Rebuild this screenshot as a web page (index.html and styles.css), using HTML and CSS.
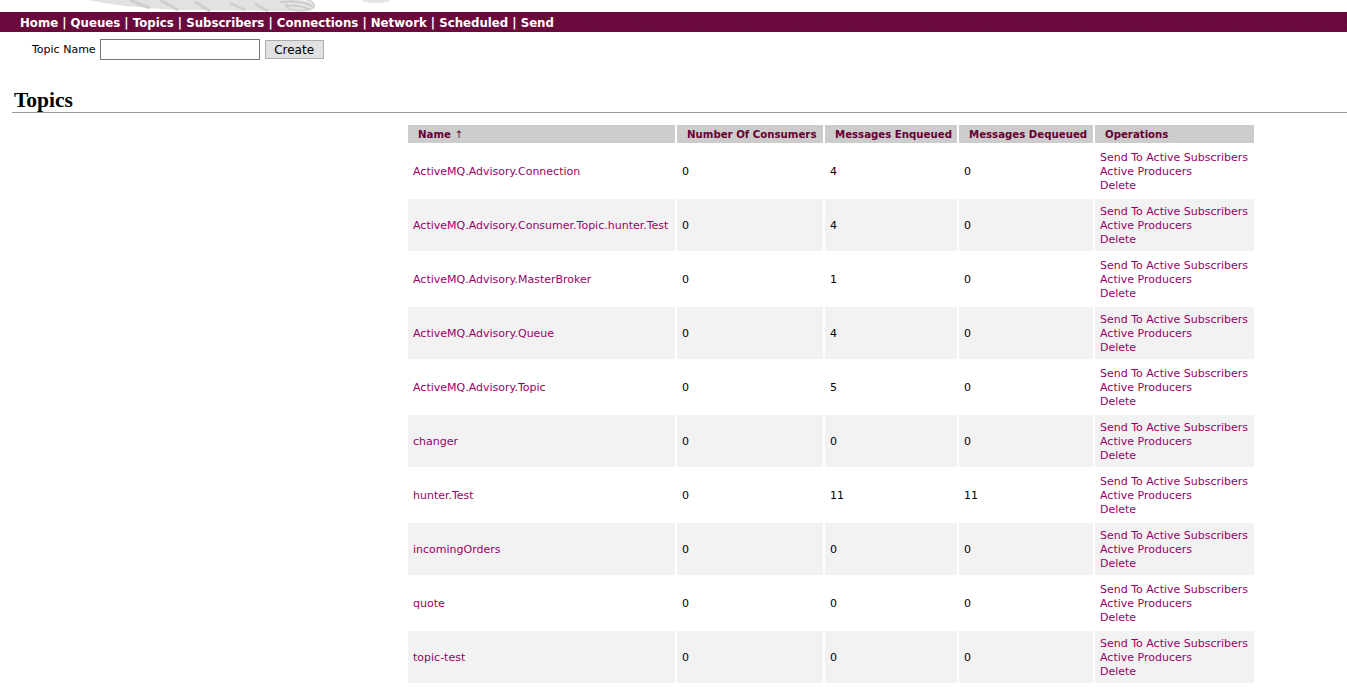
FILE: index.html
```html
<!DOCTYPE html>
<html>
<head>
<meta charset="utf-8">
<title>Topics</title>
<link rel="stylesheet" href="styles.css">
</head>
<body>
<div class="banner">
  <svg class="logo" width="420" height="12" viewBox="0 0 420 12">
    <path d="M88 0 L300 0 Q318 2 314 9 Q300 12 270 11 L180 10 Q140 8 110 4 Z" fill="#e2e2e2"/>
    <path d="M130 0 L150 8 M160 0 L178 10 M195 2 L210 11 M230 3 L245 10 M255 4 L268 11" stroke="#cfcfcf" stroke-width="3" fill="none"/>
    <path d="M280 2 Q300 0 312 6 M285 6 Q300 4 310 10" stroke="#c8c8c8" stroke-width="1.5" fill="none"/>
    <ellipse cx="300" cy="5" rx="14" ry="6" fill="none" stroke="#d0d0d0" stroke-width="1.5"/>
    <ellipse cx="376" cy="0" rx="14" ry="3" fill="#e4e4e4"/>
  </svg>
</div>
<div class="navbar">
  <a href="#">Home</a> | <a href="#">Queues</a> | <a href="#">Topics</a> | <a href="#">Subscribers</a> | <a href="#">Connections</a> | <a href="#">Network</a> | <a href="#">Scheduled</a> | <a href="#">Send</a>
</div>
<form class="create">
  <label class="create-label">Topic Name</label>
  <input class="create-input" type="text">
  <button class="create-btn" type="button">Create</button>
</form>
<h2 class="title">Topics</h2>
<table class="topics">
  <colgroup>
    <col class="c1"><col class="c2"><col class="c3"><col class="c4"><col class="c5">
  </colgroup>
  <thead>
    <tr>
      <th>Name <span class="arrow">&#8593;</span></th>
      <th>Number Of Consumers</th>
      <th>Messages Enqueued</th>
      <th>Messages Dequeued</th>
      <th>Operations</th>
    </tr>
  </thead>
  <tbody>
    <tr class="odd"><td><a href="#">ActiveMQ.Advisory.Connection</a></td><td>0</td><td>4</td><td>0</td><td class="ops"><a href="#">Send To Active Subscribers</a><br><a href="#">Active Producers</a><br><a href="#">Delete</a></td></tr>
    <tr class="even"><td><a href="#">ActiveMQ.Advisory.Consumer.Topic.hunter.Test</a></td><td>0</td><td>4</td><td>0</td><td class="ops"><a href="#">Send To Active Subscribers</a><br><a href="#">Active Producers</a><br><a href="#">Delete</a></td></tr>
    <tr class="odd"><td><a href="#">ActiveMQ.Advisory.MasterBroker</a></td><td>0</td><td>1</td><td>0</td><td class="ops"><a href="#">Send To Active Subscribers</a><br><a href="#">Active Producers</a><br><a href="#">Delete</a></td></tr>
    <tr class="even"><td><a href="#">ActiveMQ.Advisory.Queue</a></td><td>0</td><td>4</td><td>0</td><td class="ops"><a href="#">Send To Active Subscribers</a><br><a href="#">Active Producers</a><br><a href="#">Delete</a></td></tr>
    <tr class="odd"><td><a href="#">ActiveMQ.Advisory.Topic</a></td><td>0</td><td>5</td><td>0</td><td class="ops"><a href="#">Send To Active Subscribers</a><br><a href="#">Active Producers</a><br><a href="#">Delete</a></td></tr>
    <tr class="even"><td><a href="#">changer</a></td><td>0</td><td>0</td><td>0</td><td class="ops"><a href="#">Send To Active Subscribers</a><br><a href="#">Active Producers</a><br><a href="#">Delete</a></td></tr>
    <tr class="odd"><td><a href="#">hunter.Test</a></td><td>0</td><td>11</td><td>11</td><td class="ops"><a href="#">Send To Active Subscribers</a><br><a href="#">Active Producers</a><br><a href="#">Delete</a></td></tr>
    <tr class="even"><td><a href="#">incomingOrders</a></td><td>0</td><td>0</td><td>0</td><td class="ops"><a href="#">Send To Active Subscribers</a><br><a href="#">Active Producers</a><br><a href="#">Delete</a></td></tr>
    <tr class="odd"><td><a href="#">quote</a></td><td>0</td><td>0</td><td>0</td><td class="ops"><a href="#">Send To Active Subscribers</a><br><a href="#">Active Producers</a><br><a href="#">Delete</a></td></tr>
    <tr class="even"><td><a href="#">topic-test</a></td><td>0</td><td>0</td><td>0</td><td class="ops"><a href="#">Send To Active Subscribers</a><br><a href="#">Active Producers</a><br><a href="#">Delete</a></td></tr>
  </tbody>
</table>
</body>
</html>
```

FILE: styles.css
```css
html, body {
  margin: 0;
  padding: 0;
  background: #ffffff;
}
body {
  font-family: "DejaVu Sans", Verdana, sans-serif;
  font-size: 11px;
  color: #000;
}
.banner {
  height: 12px;
  overflow: hidden;
}
.logo {
  display: block;
}
.navbar {
  box-sizing: border-box;
  height: 20px;
  line-height: 20px;
  padding: 1px 0 0 20px;
  background-color: #6e0a3e;
  background-image: repeating-linear-gradient(60deg, rgba(0,0,0,0.12) 0 1px, rgba(0,0,0,0) 1px 3px);
  color: #ffffff;
  font-weight: bold;
  font-size: 11.75px;
  white-space: nowrap;
}
.navbar a {
  color: #ffffff;
  text-decoration: none;
}
.create {
  display: flex;
  align-items: center;
  margin: 7px 0 0 32px;
  height: 21px;
}
.create-label {
  font-size: 11px;
  margin-right: 4px;
}
.create-input {
  box-sizing: border-box;
  width: 160px;
  height: 21px;
  border: 1px solid #767676;
  margin: 0;
  padding: 1px 2px;
}
.create-btn {
  box-sizing: border-box;
  margin-left: 5px;
  width: 59px;
  height: 19px;
  border: 1px solid #adadad;
  background: #e1e1e1;
  font-family: "DejaVu Sans", Verdana, sans-serif;
  font-size: 12px;
  padding: 0;
  color: #000;
}
.title {
  font-family: "Liberation Serif", "Times New Roman", serif;
  font-weight: bold;
  font-size: 21.5px;
  line-height: 22px;
  margin: 29px 0 0 12px;
  padding: 0 0 1px 2px;
  border-bottom: 1px solid #999999;
}
.topics {
  margin: 10px 0 0 406px;
  border-collapse: separate;
  border-spacing: 2px;
  table-layout: fixed;
  width: 850px;
}
.c1 { width: 267px; }
.c2 { width: 146px; }
.c3 { width: 132px; }
.c4 { width: 134px; }
.c5 { width: 159px; }
.topics th {
  background: #cccccc;
  color: #660033;
  font-weight: bold;
  font-size: 10.2px;
  text-align: left;
  height: 18px;
  line-height: 14px;
  padding: 3px 10px 1px 10px;
  box-sizing: border-box;
  white-space: nowrap;
  overflow: hidden;
}
.topics th .arrow {
  font-weight: normal;
}
.topics td {
  padding: 6px 5px 4px 5px;
  line-height: 14px;
  height: 52px;
  box-sizing: border-box;
  vertical-align: middle;
  white-space: nowrap;
}
.topics tr.even td {
  background: #f2f2f2;
}
.topics a {
  color: #990066;
  text-decoration: none;
}
```
